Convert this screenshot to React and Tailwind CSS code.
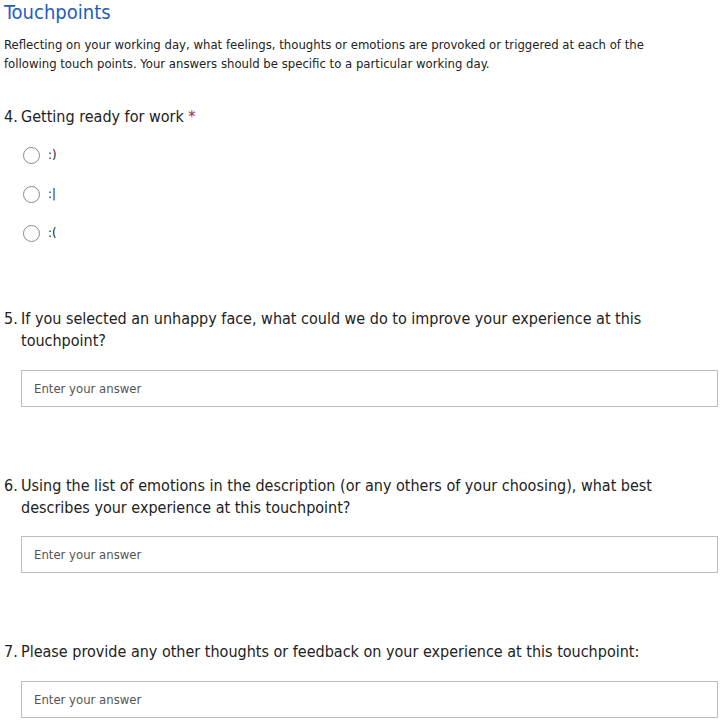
export default function App() {
  const q = "font-['DejaVu_Sans_Condensed','Liberation_Sans',sans-serif] text-[16px] text-[#222] leading-[22px]";
  const Input = () => (
    <div className="ml-[17px] mr-[2px] h-[37px] border border-[#bdbdbd] flex items-center px-[12px]">
      <span className="font-['DejaVu_Sans_Condensed',sans-serif] text-[13px] text-[#555]">Enter your answer</span>
    </div>
  );
  return (
    <div className="w-[720px] h-[720px] bg-white overflow-hidden pl-[4px] font-['DejaVu_Sans_Condensed','DejaVu_Sans',sans-serif]">
      <h1 className="text-[20px] leading-[24px] text-[#1f5cbf]">Touchpoints</h1>
      <p className="mt-[11px] text-[13px] leading-[19px] text-[#222] pr-[60px]">
        Reflecting on your working day, what feelings, thoughts or emotions are provoked or triggered at each of the following touch points. Your answers should be specific to a particular working day.
      </p>
      <div className={`${q} mt-[33px] flex`}>
        <span className="w-[17px] shrink-0">4.</span>
        <span>Getting ready for work <span className="text-[#a4262c]">*</span></span>
      </div>
      <div className="mt-[18px] flex flex-col gap-[21px] pl-[19px]">
        {[":)", ":|", ":("].map((t) => (
          <div key={t} className="flex items-center h-[18px]">
            <span className="w-[17px] h-[17px] rounded-full border border-[#8a8a8a] shrink-0"></span>
            <span className="ml-[8px] text-[13px] text-[#222]">{t}</span>
          </div>
        ))}
      </div>
      <div className={`${q} mt-[66px] flex`}>
        <span className="w-[17px] shrink-0">5.</span>
        <span className="pr-[60px]">If you selected an unhappy face, what could we do to improve your experience at this touchpoint?</span>
      </div>
      <div className="mt-[18px]"><Input /></div>
      <div className={`${q} mt-[68px] flex`}>
        <span className="w-[17px] shrink-0">6.</span>
        <span className="pr-[50px]">Using the list of emotions in the description (or any others of your choosing), what best describes your experience at this touchpoint?</span>
      </div>
      <div className="mt-[17px]"><Input /></div>
      <div className={`${q} mt-[68px] flex`}>
        <span className="w-[17px] shrink-0">7.</span>
        <span>Please provide any other thoughts or feedback on your experience at this touchpoint:</span>
      </div>
      <div className="mt-[18px]"><Input /></div>
    </div>
  );
}
